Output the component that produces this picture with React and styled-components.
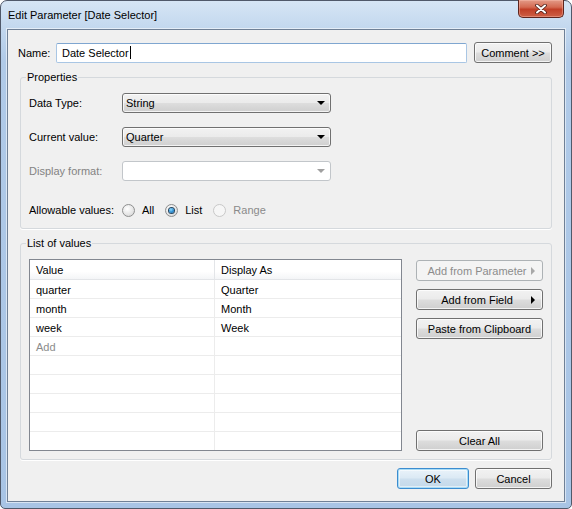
import React from "react";
import styled, { createGlobalStyle, css } from "styled-components";

const GlobalStyle = createGlobalStyle`
  html, body {
    margin: 0;
    padding: 0;
    background: #ffffff;
  }
  body {
    font-family: "Liberation Sans", Arial, sans-serif;
    font-size: 11px;
    color: #000;
  }
`;

const buttonFace = css`
  border: 1px solid #707070;
  border-radius: 3px;
  background: linear-gradient(180deg, #f2f2f2 0%, #ebebeb 48%, #dddddd 52%, #cfcfcf 100%);
  box-shadow: inset 0 0 0 1px rgba(255, 255, 255, 0.75);
`;

const Window = styled.div`
  box-sizing: border-box;
  width: 572px;
  height: 509px;
  display: flex;
  flex-direction: column;
  padding: 0 6px 6px 6px;
  border: 1px solid #50596a;
  border-radius: 7px 7px 5px 5px;
  background: linear-gradient(180deg, #d6e5f5 0px, #c2d7ee 28px, #b0cae8 60px, #a8c4e5 100%);
`;

const TitleBar = styled.div`
  height: 28px;
  display: flex;
  justify-content: space-between;
  align-items: flex-start;
`;

const Title = styled.span`
  padding: 8px 0 0 1px;
  font-size: 11px;
  color: #000;
`;

const CloseButton = styled.div`
  box-sizing: border-box;
  width: 46px;
  height: 18px;
  margin: -1px 1px 0 0;
  display: flex;
  align-items: center;
  justify-content: center;
  border: 1px solid #5e241d;
  border-top: none;
  border-radius: 0 0 5px 5px;
  background: linear-gradient(180deg, #e39a87 0%, #d46a52 42%, #c13f27 55%, #cd5f45 100%);
  box-shadow: inset 0 0 0 1px rgba(255, 200, 185, 0.4);
`;

const Client = styled.div`
  flex: 1;
  box-sizing: border-box;
  display: flex;
  flex-direction: column;
  padding: 12px 12px 10px 10px;
  background: #f0f0f0;
  border: 1px solid #6f8096;
  box-shadow: 0 0 0 1px rgba(255, 255, 255, 0.55);
`;

const NameRow = styled.div`
  display: flex;
  align-items: center;
  height: 21px;
`;

const NameLabel = styled.span`
  width: 38px;
`;

const TextBox = styled.div`
  box-sizing: border-box;
  width: 411px;
  height: 20px;
  display: flex;
  align-items: center;
  padding-left: 5px;
  background: #fff;
  border: 1px solid #a9c6e4;
  border-top-color: #7fa6d0;
  border-radius: 2px;
`;

const Caret = styled.span`
  display: inline-block;
  width: 1px;
  height: 13px;
  margin-left: 1px;
  background: #000;
`;

const Button = styled.div`
  box-sizing: border-box;
  width: ${(p) => p.$width}px;
  height: 21px;
  display: flex;
  align-items: center;
  justify-content: center;
  padding: 0 6px;
  ${buttonFace}
  ${(p) =>
    p.$disabled &&
    css`
      border-color: #adb2b5;
      background: #f4f4f4;
      box-shadow: none;
      color: #8c8c8c;
    `}
  ${(p) =>
    p.$default &&
    css`
      border-color: #3c8ccf;
      background: linear-gradient(180deg, #eaf3fa 0%, #dbe9f4 48%, #cddfee 52%, #c4d9ea 100%);
      box-shadow: inset 0 0 0 1px #a9dcf6, inset 0 0 0 2px rgba(255, 255, 255, 0.5);
    `}
`;

const ButtonText = styled.span`
  flex: 1;
  text-align: center;
`;

const SubArrow = styled.span`
  width: 0;
  height: 0;
  border-top: 4px solid transparent;
  border-bottom: 4px solid transparent;
  border-left: 4px solid ${(p) => (p.$disabled ? "#a8a8a8" : "#000")};
  margin-right: 1px;
`;

const GroupBox = styled.fieldset`
  margin: 7px 0 0 2px;
  padding: 9px 8px 8px 8px;
  min-width: 0;
  border: 1px solid #d5d9dd;
  border-radius: 3px;
  box-shadow: 0 1px 0 #fff;
`;

const Legend = styled.legend`
  margin-left: -3px;
  padding: 0 1px;
  line-height: 14px;
  font-size: 11px;
`;

const PropRow = styled.div`
  display: grid;
  grid-template-columns: 93px 209px;
  align-items: center;
  height: 20px;
  margin-top: ${(p) => p.$gap || 0}px;
  color: ${(p) => (p.$disabled ? "#838383" : "#000")};
`;

const Select = styled.div`
  box-sizing: border-box;
  height: 20px;
  display: flex;
  align-items: center;
  justify-content: space-between;
  padding: 0 5px 0 3px;
  color: #000;
  ${buttonFace}
  ${(p) =>
    p.$disabled &&
    css`
      background: #fff;
      border-color: #c2c6ca;
      box-shadow: none;
    `}
`;

const DropArrow = styled.span`
  width: 0;
  height: 0;
  border-left: 4px solid transparent;
  border-right: 4px solid transparent;
  border-top: 4px solid ${(p) => (p.$disabled ? "#a0a0a0" : "#000")};
`;

const RadioGroup = styled.div`
  display: flex;
  align-items: center;
`;

const RadioItem = styled.label`
  display: flex;
  align-items: center;
  gap: 7px;
  margin-right: 11px;
  color: ${(p) => (p.$disabled ? "#8a8a8a" : "#000")};
`;

const RadioCircle = styled.span`
  box-sizing: border-box;
  width: 13px;
  height: 13px;
  border-radius: 50%;
  display: flex;
  align-items: center;
  justify-content: center;
  border: 1px solid ${(p) => (p.$disabled ? "#c8c8c8" : "#8e8f8f")};
  background: ${(p) =>
    p.$disabled
      ? "#f6f6f6"
      : "radial-gradient(circle at 40% 35%, #ffffff 0%, #e6e6e6 55%, #cfcfcf 100%)"};
`;

const RadioDot = styled.span`
  width: 5px;
  height: 5px;
  border-radius: 50%;
  background: radial-gradient(circle at 40% 35%, #8fdcff 0%, #2a8bd0 55%, #0b4f88 100%);
  box-shadow: 0 0 0 1px #26455e;
`;

const ListArea = styled.div`
  display: flex;
  gap: 14px;
`;

const Table = styled.div`
  box-sizing: border-box;
  flex: 1;
  height: 192px;
  overflow: hidden;
  display: grid;
  grid-template-columns: 185px 1fr;
  grid-template-rows: 20px;
  grid-auto-rows: 19px;
  background: #fff;
  border: 1px solid #828790;
`;

const Cell = styled.div`
  box-sizing: border-box;
  display: flex;
  align-items: center;
  padding: 2px 0 0 6px;
  border-bottom: 1px solid #ececec;
  border-right: ${(p) => (p.$first ? "1px solid #ececec" : "none")};
  color: ${(p) => (p.$muted ? "#8c8c8c" : "#000")};
`;

const HeadCell = styled(Cell)`
  padding-top: 1px;
  background: linear-gradient(180deg, #ffffff 0%, #ffffff 60%, #f4f5f7 100%);
  border-bottom-color: #e3e5e8;
  border-right-color: #e3e5e8;
`;

const SideButtons = styled.div`
  width: 127px;
  display: flex;
  flex-direction: column;
  gap: 8px;
  padding-top: 1px;
`;

const Spacer = styled.div`
  flex: 1;
`;

const Footer = styled.div`
  display: flex;
  justify-content: flex-end;
  gap: 6px;
  margin-top: 8px;
`;

const rows = [
  ["quarter", "Quarter"],
  ["month", "Month"],
  ["week", "Week"],
];

function CloseGlyph() {
  return (
    <svg width="12" height="10" viewBox="0 0 12 10">
      <path d="M2 1.5 L10 8.5 M10 1.5 L2 8.5" stroke="#4a1d17" strokeWidth="3.6" strokeLinecap="round" />
      <path d="M2 1.5 L10 8.5 M10 1.5 L2 8.5" stroke="#ffffff" strokeWidth="2" strokeLinecap="round" />
    </svg>
  );
}

function Radio({ label, checked, disabled }) {
  return (
    <RadioItem $disabled={disabled}>
      <RadioCircle $disabled={disabled}>{checked && <RadioDot />}</RadioCircle>
      {label}
    </RadioItem>
  );
}

export default function App() {
  const emptyRows = Array.from({ length: 5 });
  return (
    <>
      <GlobalStyle />
      <Window>
        <TitleBar>
          <Title>Edit Parameter [Date Selector]</Title>
          <CloseButton>
            <CloseGlyph />
          </CloseButton>
        </TitleBar>
        <Client>
          <NameRow>
            <NameLabel>Name:</NameLabel>
            <TextBox>
              Date Selector
              <Caret />
            </TextBox>
            <Button $width={78} style={{ marginLeft: 7 }}>
              Comment &gt;&gt;
            </Button>
          </NameRow>

          <GroupBox>
            <Legend>Properties</Legend>
            <PropRow>
              <span>Data Type:</span>
              <Select>
                <span>String</span>
                <DropArrow />
              </Select>
            </PropRow>
            <PropRow $gap={14}>
              <span>Current value:</span>
              <Select>
                <span>Quarter</span>
                <DropArrow />
              </Select>
            </PropRow>
            <PropRow $gap={14} $disabled>
              <span>Display format:</span>
              <Select $disabled>
                <span />
                <DropArrow $disabled />
              </Select>
            </PropRow>
            <PropRow $gap={19}>
              <span>Allowable values:</span>
              <RadioGroup>
                <Radio label="All" />
                <Radio label="List" checked />
                <Radio label="Range" disabled />
              </RadioGroup>
            </PropRow>
          </GroupBox>

          <GroupBox>
            <Legend>List of values</Legend>
            <ListArea>
              <Table>
                <HeadCell $first>Value</HeadCell>
                <HeadCell>Display As</HeadCell>
                {rows.map(([v, d]) => (
                  <React.Fragment key={v}>
                    <Cell $first>{v}</Cell>
                    <Cell>{d}</Cell>
                  </React.Fragment>
                ))}
                <Cell $first $muted>
                  Add
                </Cell>
                <Cell />
                {emptyRows.map((_, i) => (
                  <React.Fragment key={i}>
                    <Cell $first />
                    <Cell />
                  </React.Fragment>
                ))}
              </Table>
              <SideButtons>
                <Button $width={127} $disabled>
                  <ButtonText>Add from Parameter</ButtonText>
                  <SubArrow $disabled />
                </Button>
                <Button $width={127}>
                  <ButtonText>Add from Field</ButtonText>
                  <SubArrow />
                </Button>
                <Button $width={127}>Paste from Clipboard</Button>
                <Spacer />
                <Button $width={127}>Clear All</Button>
              </SideButtons>
            </ListArea>
          </GroupBox>

          <Footer>
            <Button $width={72} $default>
              OK
            </Button>
            <Button $width={77}>Cancel</Button>
          </Footer>
        </Client>
      </Window>
    </>
  );
}
